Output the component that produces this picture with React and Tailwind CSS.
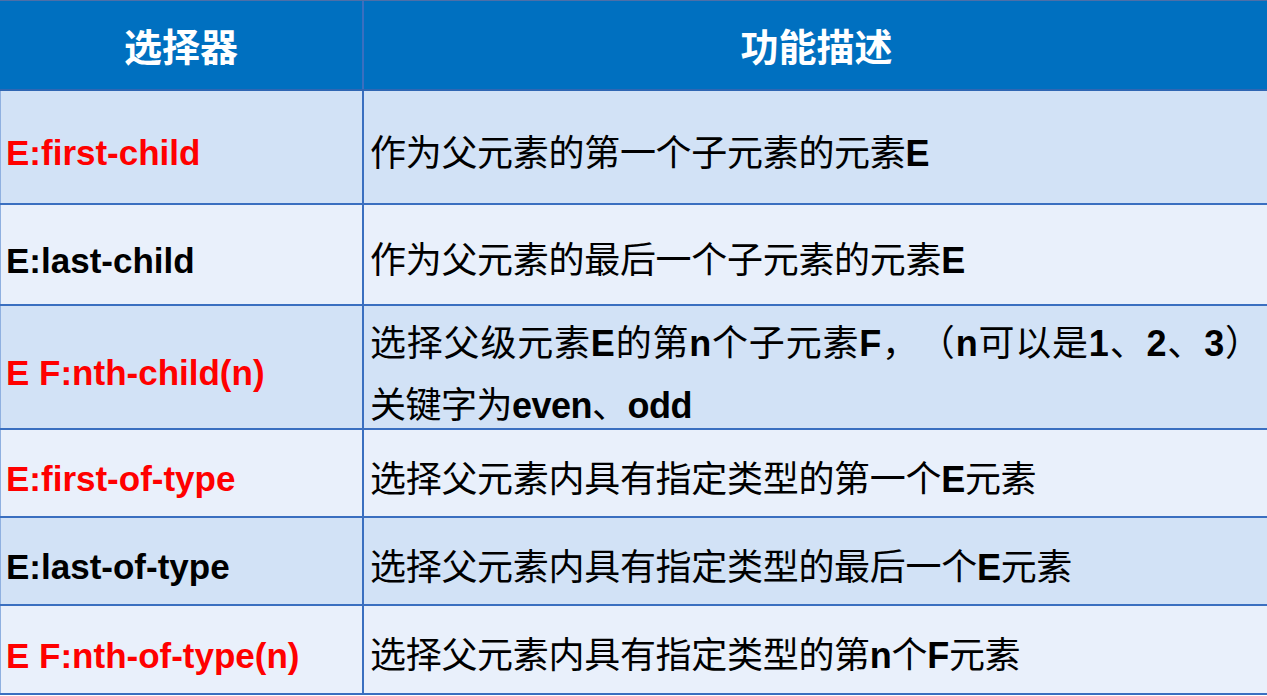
import React from "react";

const rows = [
  {
    sel: "E:first-child",
    red: true,
    h: "h-[114px]",
    bg: "bg-[#d2e2f6]",
    desc: [["作为父元素的第一个子元素的元素"], ["E", true]],
  },
  {
    sel: "E:last-child",
    red: false,
    h: "h-[101px]",
    bg: "bg-[#e9f0fb]",
    desc: [["作为父元素的最后一个子元素的元素"], ["E", true]],
  },
  {
    sel: "E F:nth-child(n)",
    red: true,
    h: "h-[124px]",
    bg: "bg-[#d2e2f6]",
    lines: [
      [
        ["选择父级元素"],
        ["E", true],
        ["的第"],
        ["n", true],
        ["个子元素"],
        ["F", true],
        ["，（"],
        ["n", true],
        ["可以是"],
        ["1", true],
        ["、"],
        ["2", true],
        ["、"],
        ["3", true],
        ["）"],
      ],
      [["关键字为"], ["even", true], ["、"], ["odd", true]],
    ],
  },
  {
    sel: "E:first-of-type",
    red: true,
    h: "h-[88px]",
    bg: "bg-[#e9f0fb]",
    desc: [["选择父元素内具有指定类型的第一个"], ["E", true], ["元素"]],
  },
  {
    sel: "E:last-of-type",
    red: false,
    h: "h-[88px]",
    bg: "bg-[#d2e2f6]",
    desc: [["选择父元素内具有指定类型的最后一个"], ["E", true], ["元素"]],
  },
  {
    sel: "E F:nth-of-type(n)",
    red: true,
    h: "h-[89px]",
    bg: "bg-[#e9f0fb]",
    desc: [["选择父元素内具有指定类型的第"], ["n", true], ["个"], ["F", true], ["元素"]],
  },
];

const Seg = ({ parts, className = "" }) => (
  <div className={`whitespace-nowrap ${className}`}>
    {parts.map(([t, b], i) =>
      b ? (
        <span key={i} className="font-bold">
          {t}
        </span>
      ) : (
        <span key={i}>{t}</span>
      )
    )}
  </div>
);

export default function App() {
  return (
    <div
      className="w-[1267px] h-[696px] bg-white overflow-hidden [text-spacing-trim:space-all]"
      style={{ fontFamily: '"Liberation Sans", "Noto Sans CJK SC", sans-serif' }}
    >
      <div className="h-px bg-[#4d6fa8]" />
      <div className="flex h-[90px] bg-[#0070c0] border-b-2 border-[#2f66b3] text-white text-[38px] font-bold">
        <div className="w-[364px] border-r-2 border-[#3a6fc0] flex items-center justify-center pt-[6px]">
          选择器
        </div>
        <div className="flex-1 flex items-center justify-center pl-[2px] pt-[6px]">功能描述</div>
      </div>
      {rows.map((r, i) => (
        <div key={i} className={`flex ${r.h} ${r.bg} border-b-2 border-[#3a6fc0]`}>
          <div
            className={`w-[364px] border-r-2 border-l border-r-[#3a6fc0] border-l-[#8fb0e0] flex items-center pl-[5px] pt-[13px] text-[35px] font-bold ${
              r.red ? "text-[#ff0000]" : "text-black"
            }`}
          >
            {r.sel}
          </div>
          <div className="flex-1 flex flex-col justify-center pl-[6px] pt-[13px] text-[36px] text-black tracking-[-0.3px]">
            {r.lines ? (
              <div className="leading-[62px] pt-[3px]">
                <Seg parts={r.lines[0]} className="tracking-[0.8px]" />
                <Seg parts={r.lines[1]} className="tracking-[-0.5px]" />
              </div>
            ) : (
              <Seg parts={r.desc} />
            )}
          </div>
        </div>
      ))}
    </div>
  );
}
